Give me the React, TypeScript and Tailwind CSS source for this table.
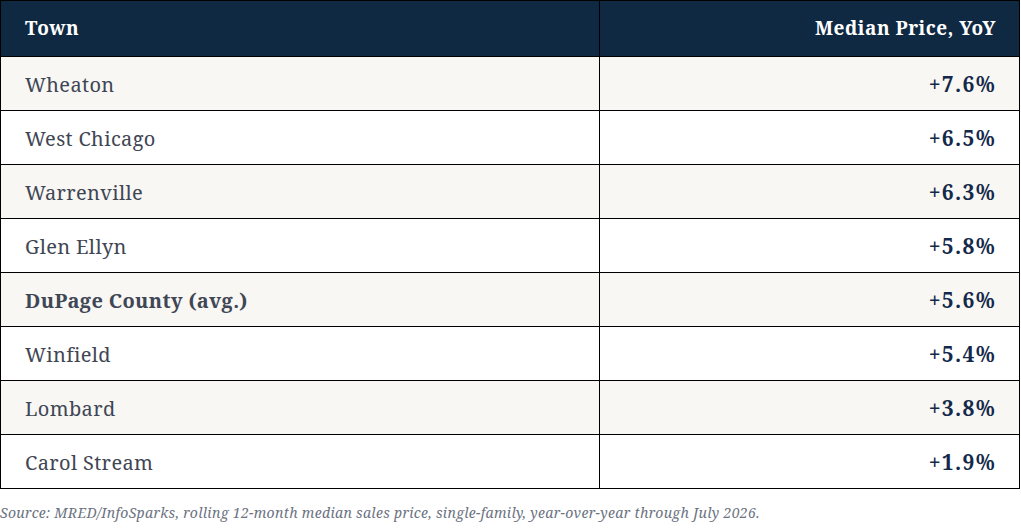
const rows = [
  { town: "Wheaton", change: "+7.6%" },
  { town: "West Chicago", change: "+6.5%" },
  { town: "Warrenville", change: "+6.3%" },
  { town: "Glen Ellyn", change: "+5.8%" },
  { town: "DuPage County (avg.)", change: "+5.6%", bold: true },
  { town: "Winfield", change: "+5.4%" },
  { town: "Lombard", change: "+3.8%" },
  { town: "Carol Stream", change: "+1.9%" },
];

const serif = { fontFamily: "'Noto Serif', 'DejaVu Serif', 'Liberation Serif', serif" };

export default function App() {
  return (
    <div className="w-[1021px] bg-white" style={serif}>
      <table className="w-[1020px] border-collapse">
        <thead>
          <tr className="h-[56px] bg-[#0f2943] text-white">
            <th className="border border-black pl-[24px] text-left text-[19px] font-bold tracking-[0.5px]">Town</th>
            <th className="border border-black pr-[23px] text-right text-[19px] font-bold tracking-[0.5px]">
              Median Price, YoY
            </th>
          </tr>
        </thead>
        <tbody>
          {rows.map((r, i) => (
            <tr key={r.town} className={`h-[54px] ${i % 2 === 0 ? "bg-[#f8f7f4]" : "bg-white"}`}>
              <td
                className={`w-[599px] border border-black pl-[24px] pt-[2px] text-[20px] tracking-[0.35px] text-[#3f4654] ${r.bold ? "font-bold" : ""}`}
              >
                {r.town}
              </td>
              <td className="border border-black pr-[23px] pt-[2px] text-right text-[21px] font-bold tracking-[1.3px] text-[#14294a]">
                {r.change}
              </td>
            </tr>
          ))}
        </tbody>
      </table>
      <p className="mt-[13px] text-[14px] italic tracking-[0.33px] text-[#6b7280]">
        Source: MRED/InfoSparks, rolling 12-month median sales price, single-family, year-over-year through July 2026.
      </p>
    </div>
  );
}
